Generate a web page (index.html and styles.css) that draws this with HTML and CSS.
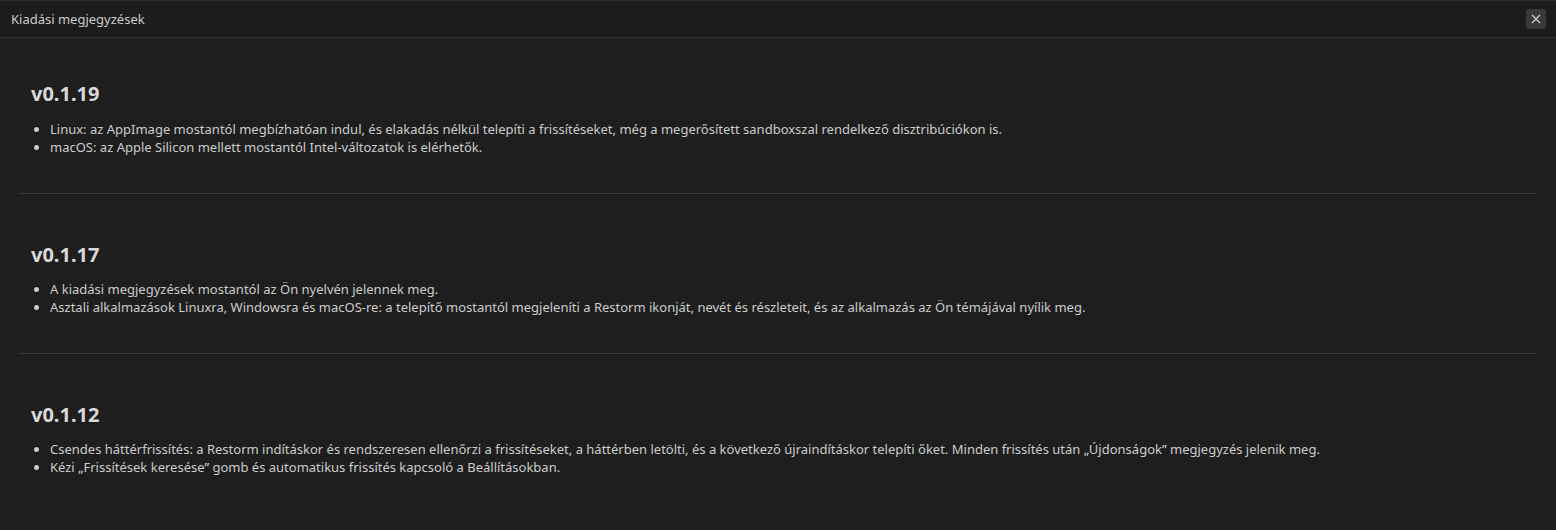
FILE: index.html
```html
<!DOCTYPE html>
<html lang="hu">
<head>
<meta charset="utf-8">
<title>Kiadási megjegyzések</title>
<link rel="stylesheet" href="styles.css">
</head>
<body>
<div class="dialog">
  <header class="dialog-header">
    <span class="dialog-title">Kiadási megjegyzések</span>
    <button class="close-btn" aria-label="Bezárás">
      <svg width="10" height="10" viewBox="0 0 10 10"><path d="M1 1L9 9M9 1L1 9" stroke="#d0d0d0" stroke-width="1.2" fill="none"/></svg>
    </button>
  </header>
  <main class="dialog-body">
    <section class="release">
      <h2 class="release-version">v0.1.19</h2>
      <ul class="release-notes">
        <li>Linux: az AppImage mostantól megbízhatóan indul, és elakadás nélkül telepíti a frissítéseket, még a megerősített sandboxszal rendelkező disztribúciókon is.</li>
        <li>macOS: az Apple Silicon mellett mostantól Intel-változatok is elérhetők.</li>
      </ul>
    </section>
    <section class="release">
      <h2 class="release-version">v0.1.17</h2>
      <ul class="release-notes">
        <li>A kiadási megjegyzések mostantól az Ön nyelvén jelennek meg.</li>
        <li>Asztali alkalmazások Linuxra, Windowsra és macOS-re: a telepítő mostantól megjeleníti a Restorm ikonját, nevét és részleteit, és az alkalmazás az Ön témájával nyílik meg.</li>
      </ul>
    </section>
    <section class="release">
      <h2 class="release-version">v0.1.12</h2>
      <ul class="release-notes">
        <li>Csendes háttérfrissítés: a Restorm indításkor és rendszeresen ellenőrzi a frissítéseket, a háttérben letölti, és a következő újraindításkor telepíti őket. Minden frissítés után „Újdonságok” megjegyzés jelenik meg.</li>
        <li>Kézi „Frissítések keresése” gomb és automatikus frissítés kapcsoló a Beállításokban.</li>
      </ul>
    </section>
  </main>
</div>
</body>
</html>
```
FILE: styles.css
```css
html, body {
  margin: 0;
  padding: 0;
  background: #1e1e1e;
  height: 100%;
}
body {
  font-family: "Noto Sans", "Open Sans", sans-serif;
  color: #cccccc;
}
.dialog {
  border-top: 1px solid #2e2e2e;
  min-height: 100%;
  box-sizing: border-box;
}
.dialog-header {
  display: flex;
  align-items: center;
  justify-content: space-between;
  height: 36px;
  padding: 0 10px 0 11px;
  border-bottom: 1px solid #333333;
  background: #1c1c1c;
}
.dialog-title {
  font-size: 13px;
  color: #cccccc;
}
.close-btn {
  width: 20px;
  height: 20px;
  padding: 0;
  border: none;
  border-radius: 3px;
  background: #3a3a3a;
  display: flex;
  align-items: center;
  justify-content: center;
}
.dialog-body {
  padding: 0 19px;
}
.release {
  padding: 49px 12px 37px;
  border-bottom: 1px solid #3a3a3a;
}
.release:first-child {
  padding-top: 44px;
}
.release:last-child {
  border-bottom: none;
}
.release-version {
  margin: 0 0 13px;
  font-size: 20px;
  line-height: 24px;
  font-weight: 700;
  color: #d8d8d8;
}
.release:first-child .release-version {
  margin-bottom: 14px;
}
.release-notes {
  margin: 0;
  padding-left: 19px;
  font-size: 13px;
  line-height: 18px;
}
```
